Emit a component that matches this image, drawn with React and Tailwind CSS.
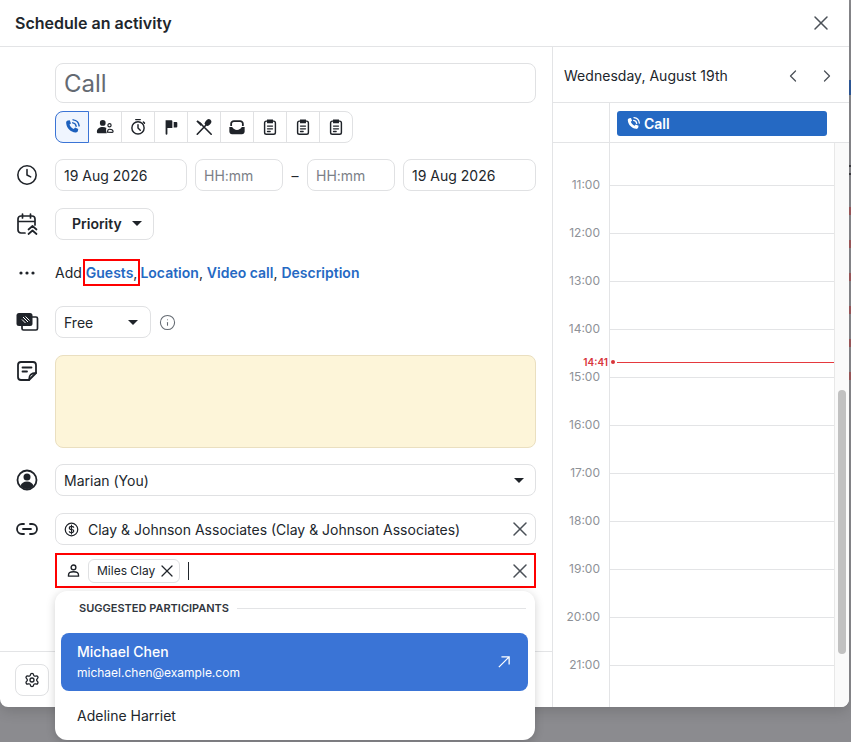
import { ChevronLeft, ChevronRight, Clock, Info, Link2, Settings, X } from "lucide-react";

const font = { fontFamily: "Inter, sans-serif" };

const PhoneWaves = ({ className }) => (
  <svg viewBox="0 0 24 24" className={className} fill="none" stroke="currentColor">
    <path
      d="M6.600 3.400 9 3l1.600 4.200-1.900 1.600c.9 2.600 3 4.800 5.700 5.900l1.700-1.900 4.200 1.700-.4 2.500c-.3 1.500-1.600 2.500-3.100 2.300C10 18.600 4.900 13.500 4.200 6.500 4.100 5 5.100 3.700 6.600 3.400Z"
      fill="currentColor"
      stroke="none"
    />
    <path d="M13 6.500c2.300.3 4.200 2.100 4.500 4.500M13.500 2.500c4.200.4 7.500 3.700 8 8" strokeWidth="2" strokeLinecap="round" />
  </svg>
);

const PeopleIcon = () => (
  <svg viewBox="0 0 20 20" className="h-[18px] w-[18px]" fill="#1f2329">
    <circle cx="7.500" cy="5.500" r="3.200" />
    <path d="M1 15.500c0-3.500 2.800-5.500 6.500-5.500 1.600 0 3 .4 4.100 1.100-.6 1-.6 3 .4 5.900H2.500C1.600 17 1 16.400 1 15.500Z" />
    <circle cx="15" cy="8" r="1.800" fill="none" stroke="#1f2329" strokeWidth="1.300" />
    <path d="M12.800 15.700c0-2 1-3.200 2.400-3.200s3.800.8 3.800 2.600c0 .5-.4.900-.9.900Z" fill="none" stroke="#1f2329" strokeWidth="1.300" />
  </svg>
);

const StopwatchIcon = () => (
  <svg viewBox="0 0 20 20" className="h-[18px] w-[18px]" fill="none" stroke="#1f2329" strokeWidth="1.600" strokeLinecap="round">
    <circle cx="10" cy="11" r="6.800" />
    <path d="M10 7.500V11l2.500 2.500M7.500 1.800h5M16 4.500l1.200 1.200" />
  </svg>
);

const FlagIcon = () => (
  <svg viewBox="0 0 20 20" className="h-[18px] w-[18px]" fill="#1f2329">
    <path d="M4 2.500h6.500c.6 0 1 .4 1 1V11H6v6.500c0 .6-.4 1-1 1s-1-.4-1-1Z" />
    <path d="M13 4.500h3c.6 0 1 .4 1 1v4c0 .6-.4 1-1 1h-3Z" />
  </svg>
);

const LunchIcon = () => (
  <svg viewBox="0 0 20 20" className="h-[18px] w-[18px]" fill="none" stroke="#1f2329" strokeWidth="1.800" strokeLinecap="round">
    <path d="M2.500 18 12 8M18 18 5 5" />
    <ellipse cx="14.500" cy="5" rx="3.100" ry="4" transform="rotate(42 14.500 5)" fill="#1f2329" stroke="none" />
    <path d="M1.500 4 3 2.500 8 7 6.500 9Z" fill="#1f2329" stroke="none" />
  </svg>
);

const InboxIcon = () => (
  <svg viewBox="0 0 20 20" className="h-[18px] w-[18px]" fill="#1f2329">
    <path d="M2.500 9V6.500C2.500 4 4.500 2.500 6.500 2.500h7c2 0 4 1.500 4 4V9h-2V6.500c0-1.200-.9-2-2-2h-7c-1.100 0-2 .8-2 2V9Z" />
    <path d="M1.500 10h3.200c1 2 3 3.200 5.300 3.200s4.300-1.200 5.300-3.200h3.200v5c0 1.700-1.300 3-3 3h-11c-1.700 0-3-1.300-3-3Z" />
  </svg>
);

const ClipboardIcon = () => (
  <svg viewBox="0 0 20 20" className="h-[18px] w-[18px]" fill="none" stroke="#1f2329" strokeWidth="1.600" strokeLinecap="round">
    <rect x="4" y="3.500" width="12" height="14.500" rx="2" />
    <path d="M7.500 2.500h5v2.500h-5Z" fill="#1f2329" />
    <path d="M7.200 9h5.600M7.200 12h5.600M7.200 15h3" strokeWidth="1.400" />
  </svg>
);

const CalendarUpIcon = () => (
  <svg viewBox="0 0 24 24" className="h-6 w-6" fill="none" stroke="#1f2329" strokeWidth="1.700" strokeLinecap="round" strokeLinejoin="round">
    <path d="M10 21H6a3 3 0 0 1-3-3V7a3 3 0 0 1 3-3h11a3 3 0 0 1 3 3v6M3 9.500h17M7.500 2v4M15.500 2v4" />
    <path d="m13.500 17.500 4-3.500 4 3.500M13.500 22l4-3.500 4 3.500" />
  </svg>
);

const BusyIcon = () => (
  <svg viewBox="0 0 24 24" className="h-6 w-6" fill="none">
    <rect x="7" y="7" width="15.500" height="13" rx="1.500" stroke="#1f2329" strokeWidth="1.700" />
    <rect x="1.500" y="3" width="16" height="13" rx="2.500" fill="#1f2329" />
    <path d="m8 7 5 5M10.500 6.500l4 4M7 9.500l3.500 3.500" stroke="#fff" strokeWidth="1" />
  </svg>
);

const NoteIcon = () => (
  <svg viewBox="0 0 24 24" className="h-6 w-6" fill="none" stroke="#1f2329" strokeWidth="1.800" strokeLinecap="round" strokeLinejoin="round">
    <path d="M14 21H6a3 3 0 0 1-3-3V6a3 3 0 0 1 3-3h12a3 3 0 0 1 3 3v8Z" />
    <path d="M7.500 8.500h9M7.500 12.500h4.500M14 21c0-4 1-7 7-7" />
  </svg>
);

const OwnerIcon = () => (
  <svg viewBox="0 0 24 24" className="h-6 w-6" fill="none">
    <circle cx="12" cy="12" r="9.500" stroke="#1f2329" strokeWidth="1.800" />
    <circle cx="12" cy="9" r="3.500" fill="#1f2329" />
    <path d="M5.500 18c.8-3 3.300-4.500 6.500-4.500s5.700 1.500 6.500 4.500c-1.700 1.800-4 3-6.500 3s-4.800-1.200-6.500-3Z" fill="#1f2329" />
  </svg>
);

const DollarIcon = () => (
  <svg viewBox="0 0 24 24" className="h-[15px] w-[15px]" fill="none" stroke="#1f2329" strokeWidth="2" strokeLinecap="round">
    <circle cx="12" cy="12" r="10" />
    <path d="M15.500 8.500C15 7.500 13.700 7 12 7c-2 0-3.500 1-3.500 2.500S10 12 12 12s3.500 1 3.500 2.500S14 17 12 17c-1.700 0-3-.5-3.500-1.500M12 5v14" strokeWidth="1.800" />
  </svg>
);

const PersonIcon = () => (
  <svg viewBox="0 0 24 24" className="h-[15px] w-[15px]" fill="none" stroke="#1f2329" strokeWidth="2.200">
    <circle cx="12" cy="7" r="3.800" />
    <path d="M4 19c0-3.500 3.500-5 8-5s8 1.500 8 5v2H4Z" />
  </svg>
);

const Caret = () => <span className="h-0 w-0 border-x-[5px] border-t-[5px] border-x-transparent border-t-[#1f2329]" />;

const activityIcons = [
  <PeopleIcon key="meeting" />,
  <StopwatchIcon key="task" />,
  <FlagIcon key="deadline" />,
  <LunchIcon key="lunch" />,
  <InboxIcon key="email" />,
  <ClipboardIcon key="a" />,
  <ClipboardIcon key="b" />,
  <ClipboardIcon key="c" />,
];

const hours = ["11:00", "12:00", "13:00", "14:00", "15:00", "16:00", "17:00", "18:00", "19:00", "20:00", "21:00"];

// bits of the page behind the modal that show along its right edge
const behindMarks = [207, 240, 273, 306, 339, 372];

const fieldClass = "flex h-8 items-center rounded-lg border border-[#e0e1e3] bg-white px-2 text-[14px]";

const FormRow = ({ icon, className = "", children }) => (
  <div className={`flex pl-[15px] pr-[16px] ${className}`}>
    <div className="flex w-[40px] shrink-0 items-start pt-1">{icon}</div>
    <div className="min-w-0 flex-1">{children}</div>
  </div>
);

export default function App() {
  return (
    <div className="relative h-[742px] w-[851px] overflow-hidden bg-[#8b8b8f]" style={font}>
      {/* Page behind the modal */}
      <div className="absolute right-0 top-0 h-[400px] w-[2px]">
        <div className="mt-[80px] h-[15px] bg-[#2f5b9c]" />
        <div className="mt-[70px] h-[2px] bg-[#3d3d42]" />
        <div className="mt-[6px] h-[2px] bg-[#3d3d42]" />
        {behindMarks.map((top) => (
          <div key={top} className="absolute h-[8px] w-[2px] bg-[#a05a5e]" style={{ top }} />
        ))}
      </div>

      {/* Modal */}
      <div className="relative flex h-[707px] w-[849px] flex-col overflow-hidden rounded-b-lg bg-white text-[#21262c] shadow-[0_4px_14px_rgba(0,0,0,0.15)]">
        <header className="flex h-[47px] shrink-0 items-center justify-between border-b border-[#e3e4e6] pl-[15px] pr-[16px]">
          <h1 className="text-[16px] font-semibold leading-none">Schedule an activity</h1>
          <X size={24} strokeWidth={1.500} className="text-[#4b5158]" />
        </header>

        <div className="flex min-h-0 flex-1">
          {/* Form column */}
          <div className="flex w-[553px] shrink-0 flex-col border-r border-[#e3e4e6] pt-4">
            <FormRow>
              <div className="flex h-10 items-center rounded-lg border border-[#e0e1e3] px-2 pt-[2px] text-[24px] leading-none text-[#646a72]">
                Call
              </div>
              <div className="mt-2 flex h-8 w-[298px] rounded-lg border border-[#e0e1e3]">
                <div className="-my-px -ml-px flex h-8 w-[34px] shrink-0 items-center justify-center rounded-l-lg border border-[#3a74d6] bg-[#eff5fe] text-[#1c60bd]">
                  <PhoneWaves className="h-[18px] w-[18px]" />
                </div>
                {activityIcons.map((icon) => (
                  <div key={icon.key} className="flex w-[33px] shrink-0 items-center justify-center border-r border-[#e0e1e3] last:w-[32px] last:border-r-0">
                    {icon}
                  </div>
                ))}
              </div>
            </FormRow>

            <FormRow className="mt-4" icon={<Clock size={22} strokeWidth={1.700} className="ml-[1px] mt-[1px] text-[#1f2329]" />}>
              <div className="flex items-center">
                <div className={`${fieldClass} w-[132px] text-[#21262c]`}>19 Aug 2026</div>
                <div className={`${fieldClass} ml-2 w-[88px] text-[#7b8087]`}>HH:mm</div>
                <span className="w-[24px] text-center text-[14px]">–</span>
                <div className={`${fieldClass} w-[88px] text-[#7b8087]`}>HH:mm</div>
                <div className={`${fieldClass} ml-2 flex-1 text-[#21262c]`}>19 Aug 2026</div>
              </div>
            </FormRow>

            <FormRow className="mt-[17px]" icon={<CalendarUpIcon />}>
              <div className={`${fieldClass} w-[99px] justify-between pb-[1px] pl-4 pr-[11px] font-semibold text-[#21262c]`}>
                Priority
                <Caret />
              </div>
            </FormRow>

            <FormRow className="mt-[17px]" icon={<span className="ml-[4px] mt-[10px] text-[0px]"><svg width="16" height="4" viewBox="0 0 16 4" fill="#1f2329"><circle cx="2" cy="2" r="1.600" /><circle cx="8" cy="2" r="1.600" /><circle cx="14" cy="2" r="1.600" /></svg></span>}>
              <p className="flex h-8 items-center whitespace-pre pb-[2px] text-[14px]">
                <span>Add</span>
                <span className="ml-[4px]">
                  <span className="relative font-semibold text-[#2569c3]">
                    Guests
                    <span className="font-normal text-[#21262c]">,</span>
                    <span className="absolute -bottom-[5px] -left-[3px] -right-[3px] -top-[5px] border-2 border-[#ff0000]" />
                  </span>
                </span>
                <span className="ml-[3px]">
                  <span className="font-semibold text-[#2569c3]">Location</span>,{" "}
                  <span className="font-semibold text-[#2569c3]">Video call</span>,{" "}
                  <span className="font-semibold text-[#2569c3]">Description</span>
                </span>
              </p>
            </FormRow>

            <FormRow className="mt-[17px]" icon={<BusyIcon />}>
              <div className="flex items-center gap-2">
                <div className={`${fieldClass} w-[96px] justify-between pr-[12px] text-[#21262c]`}>
                  Free
                  <Caret />
                </div>
                <Info size={17} strokeWidth={1.500} className="text-[#646a72]" />
              </div>
            </FormRow>

            <FormRow className="mt-[17px]" icon={<NoteIcon />}>
              <div className="h-[93px] rounded-lg border border-[#eadfc0] bg-[#fdf5d9]" />
            </FormRow>

            <FormRow className="mt-4" icon={<OwnerIcon />}>
              <div className={`${fieldClass} justify-between pr-[11px] text-[#21262c]`}>
                Marian (You)
                <Caret />
              </div>
            </FormRow>

            <FormRow className="mt-[17px]" icon={<Link2 size={24} strokeWidth={1.800} className="text-[#1f2329]" />}>
              <div className={`${fieldClass} justify-between pr-[3px] text-[#21262c]`}>
                <span className="flex items-center gap-[9px]">
                  <DollarIcon />
                  Clay &amp; Johnson Associates (Clay &amp; Johnson Associates)
                </span>
                <X size={24} strokeWidth={1.500} className="text-[#4b5158]" />
              </div>
              <div className="mt-2 flex h-[35px] items-center border-2 border-[#ff0000] pl-[9px] pr-[2px] text-[14px]">
                <PersonIcon />
                <span className="ml-[7px] flex h-6 w-[92px] items-center justify-between rounded-md border border-[#e0e1e3] pl-2 pr-[2px] text-[12px]">
                  Miles Clay
                  <X size={20} strokeWidth={1.500} className="text-[#21262c]" />
                </span>
                <span className="ml-2 h-[18px] w-px bg-[#21262c]" />
                <X size={24} strokeWidth={1.500} className="ml-auto text-[#4b5158]" />
              </div>
            </FormRow>

            <footer className="mt-auto flex h-[56px] items-center border-t border-[#e3e4e6] pl-[15px]">
              <div className="flex h-8 w-[34px] items-center justify-center rounded-lg border border-[#e0e1e3]">
                <Settings size={16} strokeWidth={2} className="text-[#1f2329]" />
              </div>
            </footer>
          </div>

          {/* Day calendar */}
          <div className="flex min-w-0 flex-1 flex-col">
            <div className="flex h-[56px] shrink-0 items-center justify-between border-b border-[#e3e4e6] pl-[11px] pr-[12px] pt-[2px]">
              <span className="text-[14px] tracking-[0.03px]">Wednesday, August 19th</span>
              <div className="flex items-center gap-[14px] text-[#4b5158]">
                <ChevronLeft size={20} strokeWidth={1.500} />
                <ChevronRight size={20} strokeWidth={1.500} />
              </div>
            </div>
            <div className="flex h-[40px] shrink-0 border-b border-[#e3e4e6]">
              <div className="w-[57px] shrink-0 border-r border-[#e3e4e6]" />
              <div className="ml-[7px] mt-2 flex h-[25px] w-[210px] items-center gap-[3px] rounded-[3px] bg-[#2569c3] pl-[8px] text-[14px] font-semibold text-white">
                <PhoneWaves className="h-[16px] w-[16px]" />
                Call
              </div>
            </div>
            <div className="relative flex min-h-0 flex-1 overflow-hidden">
              <div className="flex-1">
                <div className="ml-[56px] h-[43px] border-b border-l border-[#e3e4e6]" />
                {hours.map((hour) => (
                  <div key={hour} className="flex h-[48px]">
                    <span className="w-[47px] shrink-0 -translate-y-[10px] text-right text-[12px] leading-[18px] text-[#8e9197]">{hour}</span>
                    <div className="ml-[9px] flex-1 border-b border-l border-[#e3e4e6]" />
                  </div>
                ))}
              </div>
              {/* Scrollbar */}
              <div className="w-[15px] shrink-0 border-l border-[#e8e8e8] bg-[#fafafa] pl-[3px] pt-[247px]">
                <div className="h-[264px] w-2 rounded-full bg-[#c1c1c1]" />
              </div>
              {/* Now marker */}
              <div className="absolute left-0 top-[214px] flex w-[281px] items-center">
                <span className="w-[55px] text-right text-[10px] font-semibold leading-none text-[#d8353a]">14:41</span>
                <span className="ml-[3px] h-[4px] w-[4px] rounded-full bg-[#d8353a]" />
                <span className="ml-[2px] h-px flex-1 bg-[#e5393e]" />
              </div>
            </div>
          </div>
        </div>
      </div>

      {/* Suggestions popup */}
      <div className="absolute left-[55px] top-[591px] h-[149px] w-[480px] rounded-xl bg-white shadow-[0_2px_10px_rgba(0,0,0,0.18)]">
        <div className="flex h-[35px] items-center pb-[1px] pl-[24px] pr-[9px]">
          <span className="text-[11px] font-semibold text-[#31363d]">SUGGESTED PARTICIPANTS</span>
          <span className="ml-2 h-px flex-1 bg-[#e3e4e6]" />
        </div>
        <div className="mx-[6px] mt-[7px] flex h-[58px] w-[467px] items-center justify-between rounded-lg bg-[#3a74d6] pl-[16px] pr-[18px] text-white">
          <div className="pb-[2px]">
            <div className="text-[14px] font-medium leading-[20px]">Michael Chen</div>
            <div className="mt-[3px] text-[12px] leading-[16px]">michael.chen@example.com</div>
          </div>
          <svg viewBox="0 0 14 14" className="h-3 w-3" fill="none" stroke="currentColor" strokeWidth="1.500">
            <path d="M1 13 13 1M4 1h9v9" />
          </svg>
        </div>
        <div className="flex h-[48px] items-center pl-[22px] text-[14px] text-[#21262c]">Adeline Harriet</div>
      </div>
    </div>
  );
}
